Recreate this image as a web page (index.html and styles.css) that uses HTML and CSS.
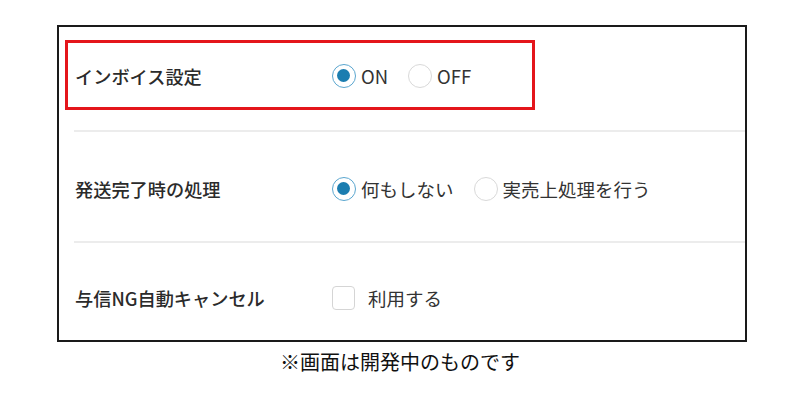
FILE: index.html
```html
<!DOCTYPE html>
<html lang="ja">
<head>
<meta charset="utf-8">
<link rel="stylesheet" href="styles.css">
</head>
<body>
<div class="panel">
  <div class="row row-first">
    <div class="highlight">
      <div class="label">インボイス設定</div>
      <div class="value">
        <span class="opt"><span class="radio checked"></span><span class="opt-text">ON</span></span>
        <span class="opt"><span class="radio"></span><span class="opt-text">OFF</span></span>
      </div>
    </div>
  </div>
  <div class="row row-second">
    <div class="label">発送完了時の処理</div>
    <div class="value">
      <span class="opt"><span class="radio checked"></span><span class="opt-text">何もしない</span></span>
      <span class="opt"><span class="radio"></span><span class="opt-text">実売上処理を行う</span></span>
    </div>
  </div>
  <div class="row row-third">
    <div class="label">与信NG自動キャンセル</div>
    <div class="value">
      <span class="opt"><span class="checkbox"></span><span class="opt-text cb-text">利用する</span></span>
    </div>
  </div>
</div>
<p class="caption">※画面は開発中のものです</p>
</body>
</html>
```
FILE: styles.css
```css
* { box-sizing: border-box; }
html, body { margin: 0; padding: 0; background: #fff; }
body {
  width: 800px;
  height: 401px;
  overflow: hidden;
  font-family: "Noto Sans CJK JP", "Noto Sans", sans-serif;
  color: #333;
}
.panel {
  margin: 25px 0 0 57px;
  width: 690px;
  height: 317px;
  border: 2px solid #1a1a1a;
  padding-left: 15px;
}
.row {
  display: flex;
  align-items: center;
}
.row-first {
  display: block;
  height: 103px;
  padding-top: 13px;
  margin-left: -9px;
}
.highlight {
  display: flex;
  align-items: center;
  width: 470px;
  height: 70px;
  border: 3px solid #e4161b;
  padding-left: 7px;
  padding-top: 2px;
}
.row-second {
  border-top: 2px solid #ececec;
  height: 111px;
  padding-top: 4px;
  padding-left: 1px;
}
.row-third {
  border-top: 2px solid #ececec;
  height: 99px;
  padding-top: 13px;
  padding-left: 1px;
}
.label {
  width: 257px;
  font-size: 18.2px;
  font-weight: 500;
  color: #2b2b2b;
  line-height: 24px;
}
.value {
  display: flex;
  align-items: center;
  gap: 20px;
}
.opt {
  display: flex;
  align-items: center;
  gap: 5px;
}
.opt-text {
  font-size: 18.5px;
  font-weight: 400;
  color: #333;
  line-height: 24px;
}
.cb-text { margin-left: 8px; }
.radio {
  width: 24px;
  height: 24px;
  border-radius: 50%;
  border: 1.5px solid #d9d9d9;
  background: #fff;
  position: relative;
  flex: none;
}
.radio.checked {
  border-color: #5aa6cf;
}
.radio.checked::after {
  content: "";
  position: absolute;
  left: 4px;
  top: 4px;
  width: 13px;
  height: 13px;
  border-radius: 50%;
  background: #1b7db0;
}
.checkbox {
  width: 23px;
  height: 24px;
  border: 1px solid #d5d5d5;
  border-radius: 4px;
  background: #fff;
  flex: none;
}
.caption {
  margin: 6px 0 0;
  text-align: center;
  font-size: 20px;
  line-height: 28px;
  color: #111;
  font-weight: 400;
}
```
